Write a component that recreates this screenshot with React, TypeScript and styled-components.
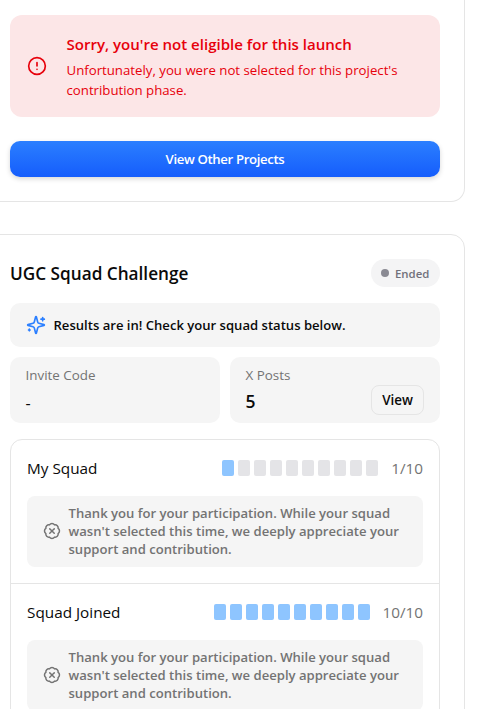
import React from 'react';
import styled, { createGlobalStyle } from 'styled-components';
import { BadgeX, CircleAlert } from 'lucide-react';

const GlobalStyle = createGlobalStyle`
  *, *::before, *::after { box-sizing: border-box; }
  body {
    margin: 0;
    background: #fff;
    color: #0a0a0a;
    font-family: "Open Sans", "Noto Sans", sans-serif;
    overflow: hidden;
  }
  h2, h3, p { margin: 0; }
`;

const Page = styled.main`
  display: flex;
  flex-direction: column;
  gap: 32px;
  width: 480px;
  height: 709px;
  margin-left: -15px;
  overflow: hidden;
`;

const Card = styled.section<{ $continued?: boolean }>`
  flex: none;
  display: flex;
  flex-direction: column;
  padding: ${p => (p.$continued ? '15px 24px 24px' : '24px')};
  border: 1px solid #e5e5e5;
  border-top-width: ${p => (p.$continued ? 0 : 1)}px;
  border-radius: ${p => (p.$continued ? '0 0 14px 14px' : '14px')};
`;

const Alert = styled.div`
  display: flex;
  align-items: center;
  gap: 19.5px;
  height: 102px;
  padding: 0 17px;
  border-radius: 12px;
  background: #fce6e7;
  color: #e7000b;
  svg { flex: none; }
`;

const AlertBody = styled.div`
  display: flex;
  flex-direction: column;
  gap: 4px;
`;

const AlertTitle = styled.h3`
  font-size: 15.05px;
  font-weight: 600;
  line-height: 24px;
`;

const AlertText = styled.p`
  font-size: 13.22px;
  line-height: 20px;
`;

const PrimaryButton = styled.button`
  height: 36px;
  margin-top: 24px;
  padding: 0;
  border: 0;
  border-radius: 10px;
  background: linear-gradient(#2b7fff, #155dfc);
  box-shadow: 0 2px 5px rgba(0, 0, 0, 0.16);
  color: #fff;
  font: 600 13.2px/20px "Open Sans", sans-serif;
  letter-spacing: -0.36px;
`;

const Header = styled.header`
  display: flex;
  align-items: center;
  justify-content: space-between;
  height: 28px;
`;

const Title = styled.h2`
  font-size: 17.2px;
  font-weight: 600;
  line-height: 28px;
  padding-top: 1px;
`;

const Badge = styled.span`
  display: flex;
  align-items: center;
  gap: 6px;
  width: 69px;
  height: 28px;
  padding: 0 10px;
  border-radius: 14px;
  background: #f4f4f5;
  color: #71717b;
  font-size: 11.4px;
  font-weight: 600;
`;

const Dot = styled.i`
  flex: none;
  width: 8px;
  height: 8px;
  border-radius: 50%;
  background: #8a8a93;
`;

const Banner = styled.div`
  display: flex;
  align-items: center;
  gap: 7.5px;
  height: 44px;
  margin-top: 16px;
  padding: 0 16px;
  border-radius: 10px;
  background: #f5f5f5;
  font-size: 13.08px;
  font-weight: 600;
`;

const SparklesSvg = styled.svg`
  width: 20px;
  height: 20px;
  fill: none;
  stroke: #2b7fff;
  stroke-width: 2;
  stroke-linecap: round;
  stroke-linejoin: round;
`;

const Stats = styled.div`
  display: grid;
  grid-template-columns: 1fr 1fr;
  gap: 10px;
  margin-top: 10px;
`;

const Stat = styled.div`
  height: 66px;
  padding: 8px 16px 8px 15.5px;
  border-radius: 10px;
  background: #f5f5f5;
`;

const StatLabel = styled.div`
  color: #737373;
  font-size: 13.4px;
  line-height: 20px;
`;

const StatRow = styled.div`
  display: flex;
  align-items: center;
  justify-content: space-between;
  height: 30px;
`;

const StatValue = styled.span<{ $empty?: boolean }>`
  padding-top: ${p => (p.$empty ? 6 : 1)}px;
  font-size: ${p => (p.$empty ? 16 : 17.5)}px;
  font-weight: ${p => (p.$empty ? 400 : 600)};
  line-height: 30px;
`;

const OutlineButton = styled.button`
  width: 53px;
  height: 30px;
  padding: 0;
  border: 1px solid #e5e5e5;
  border-radius: 8px;
  background: transparent;
  color: #0a0a0a;
  font: 600 13.4px/20px "Open Sans", sans-serif;
`;

const SquadList = styled.div`
  margin-top: 16px;
  border: 1px solid #e5e5e5;
  border-radius: 12px;
`;

const Squad = styled.div`
  padding: 16px;
  & + & { border-top: 1px solid #e5e5e5; }
`;

const SquadHead = styled.div`
  display: flex;
  align-items: center;
  height: 24px;
`;

const SquadName = styled.span`
  flex: 1;
  font-size: 15.3px;
  line-height: 24px;
`;

const Members = styled.div`
  display: flex;
  gap: 4px;
`;

const Member = styled.i<{ $filled: boolean }>`
  width: 12px;
  height: 16px;
  border-radius: 2px;
  background: ${p => (p.$filled ? '#8ec5ff' : '#e4e4e7')};
`;

const Count = styled.span<{ $chars: number }>`
  width: ${p => (p.$chars - 1) * 8 + 9}px;
  margin-left: 12px;
  color: #737373;
  font-size: 15.3px;
  line-height: 24px;
  text-align: right;
`;

const Notice = styled.div`
  display: flex;
  align-items: center;
  gap: 7.5px;
  height: 71px;
  margin-top: 16px;
  padding: 0 0 2px 16px;
  border-radius: 8px;
  background: #f5f5f5;
  color: #737373;
  font-size: 13.1px;
  font-weight: 600;
  line-height: 18px;
  svg { flex: none; }
`;

const NoticeText = styled.p`
  width: 338px;
`;

const squads = [
  { name: 'My Squad', members: 1 },
  { name: 'Squad Joined', members: 10 },
];

function SparklesIcon() {
  return (
    <SparklesSvg viewBox="0 0 24 24">
      <path d="M9.937 15.5A2 2 0 0 0 8.5 14.063l-6.135-1.582a.5.5 0 0 1 0-.962L8.5 9.936A2 2 0 0 0 9.937 8.5l1.582-6.135a.5.5 0 0 1 .963 0L14.063 8.5A2 2 0 0 0 15.5 9.937l6.135 1.581a.5.5 0 0 1 0 .964L15.5 14.063a2 2 0 0 0-1.437 1.437l-1.582 6.135a.5.5 0 0 1-.963 0z" />
      <path d="M20 3v4M22 5h-4M4 17v2M5 18H3" />
    </SparklesSvg>
  );
}

function SquadSection({ name, members }: { name: string; members: number }) {
  const count = `${members}/10`;
  return (
    <Squad>
      <SquadHead>
        <SquadName>{name}</SquadName>
        <Members>
          {Array.from({ length: 10 }, (_, i) => <Member key={i} $filled={i < members} />)}
        </Members>
        <Count $chars={count.length}>{count}</Count>
      </SquadHead>
      <Notice>
        <BadgeX size={18} />
        <NoticeText>
          Thank you for your participation. While your squad wasn't selected this time, we deeply
          appreciate your support and contribution.
        </NoticeText>
      </Notice>
    </Squad>
  );
}

export default function App() {
  return (
    <>
      <GlobalStyle />
      <Page>
        <Card $continued>
          <Alert>
            <CircleAlert size={20} />
            <AlertBody>
              <AlertTitle>Sorry, you're not eligible for this launch</AlertTitle>
              <AlertText>
                Unfortunately, you were not selected for this project's contribution phase.
              </AlertText>
            </AlertBody>
          </Alert>
          <PrimaryButton>View Other Projects</PrimaryButton>
        </Card>
        <Card>
          <Header>
            <Title>UGC Squad Challenge</Title>
            <Badge><Dot />Ended</Badge>
          </Header>
          <Banner>
            <SparklesIcon />
            Results are in! Check your squad status below.
          </Banner>
          <Stats>
            <Stat>
              <StatLabel>Invite Code</StatLabel>
              <StatRow><StatValue $empty>-</StatValue></StatRow>
            </Stat>
            <Stat>
              <StatLabel>X Posts</StatLabel>
              <StatRow>
                <StatValue>5</StatValue>
                <OutlineButton>View</OutlineButton>
              </StatRow>
            </Stat>
          </Stats>
          <SquadList>
            {squads.map(s => <SquadSection key={s.name} {...s} />)}
          </SquadList>
        </Card>
      </Page>
    </>
  );
}
